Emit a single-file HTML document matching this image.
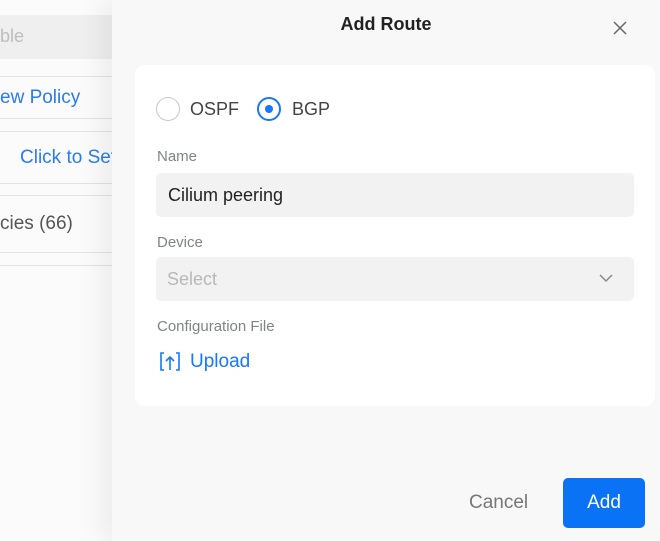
<!DOCTYPE html>
<html><head><style>
*{margin:0;padding:0;box-sizing:border-box}
body{width:660px;height:541px;overflow:hidden;font-family:"Liberation Sans",sans-serif;background:#fff;position:relative}
.abs{position:absolute}
.left{left:0;top:0;width:112px;height:541px;background:#fbfbfb}
.line{position:absolute;left:0;width:112px;height:1px;background:#e2e2e2}
.panel{left:112px;top:0;width:548px;height:541px;background:#f8f8f9;box-shadow:-12px 0 24px rgba(0,0,0,.06)}
.card{left:135px;top:65px;width:520px;height:341px;background:#fff;border-radius:10px}
.lbl{color:#808389;font-size:15px}
.inp{background:#f2f2f3;border-radius:5px;height:44px}
</style></head><body>
<div class="abs left">
 <div class="abs" style="left:0;top:15px;width:112px;height:44px;background:#efefef"></div>
 <div class="abs" style="left:0;top:26px;font-size:18px;color:#bdbdbd">ble</div>
 <div class="line" style="top:76px"></div>
 <div class="abs" style="left:0;top:87px;font-size:19px;color:#2b7bf0">ew Policy</div>
 <div class="line" style="top:118px"></div>
 <div class="line" style="top:131px"></div>
 <div class="abs" style="left:20px;top:147px;font-size:19px;color:#2b7bf0;white-space:nowrap">Click to Set</div>
 <div class="line" style="top:183px"></div>
 <div class="line" style="top:195px"></div>
 <div class="abs" style="left:0;top:213px;font-size:19px;color:#555">cies (66)</div>
 <div class="line" style="top:252px"></div>
 <div class="line" style="top:265px"></div>
</div>
<div class="abs panel"></div>
<div class="abs" style="left:112px;width:548px;top:14px;text-align:center;font-size:18px;font-weight:bold;color:#222">Add Route</div>
<svg class="abs" style="left:612px;top:20px" width="16" height="16" viewBox="0 0 16 16"><path d="M2 2L14 14M14 2L2 14" stroke="#666" stroke-width="1.5"/></svg>
<div class="abs card"></div>
<div class="abs" style="left:156px;top:97px;width:24px;height:24px;border:1.5px solid #c8c8c8;border-radius:50%"></div>
<div class="abs" style="left:190px;top:99px;font-size:18px;color:#444">OSPF</div>
<div class="abs" style="left:257px;top:97px;width:24px;height:24px;border:2px solid #1677ff;border-radius:50%"></div>
<div class="abs" style="left:265px;top:105px;width:8px;height:8px;background:#1677ff;border-radius:50%"></div>
<div class="abs" style="left:292px;top:99px;font-size:18px;color:#444">BGP</div>
<div class="abs lbl" style="left:157px;top:148px">Name</div>
<div class="abs inp" style="left:156px;top:173px;width:478px"></div>
<div class="abs" style="left:168px;top:185px;font-size:18px;color:#222">Cilium peering</div>
<div class="abs lbl" style="left:157px;top:234px">Device</div>
<div class="abs inp" style="left:156px;top:257px;width:478px"></div>
<div class="abs" style="left:167px;top:269px;font-size:18px;color:#b8b8b8">Select</div>
<svg class="abs" style="left:598px;top:272px" width="16" height="12" viewBox="0 0 16 12"><path d="M2 3L8 9L14 3" fill="none" stroke="#888" stroke-width="1.5"/></svg>
<div class="abs lbl" style="left:157px;top:318px">Configuration File</div>
<svg class="abs" style="left:159px;top:351px" width="22" height="22" viewBox="0 0 22 22" fill="none" stroke="#1677ff" stroke-width="1.6"><path d="M5 2H2V19H5M17 2H20V19H17M11 19V6M7 10L11 6L15 10"/></svg>
<div class="abs" style="left:190px;top:351px;font-size:19px;color:#1677ff">Upload</div>
<div class="abs" style="left:469px;top:492px;font-size:19px;color:#777">Cancel</div>
<div class="abs" style="left:563px;top:478px;width:82px;height:50px;background:#0a72f5;border-radius:5px;color:#fff;font-size:19px;text-align:center;line-height:50px">Add</div>
</body></html>
